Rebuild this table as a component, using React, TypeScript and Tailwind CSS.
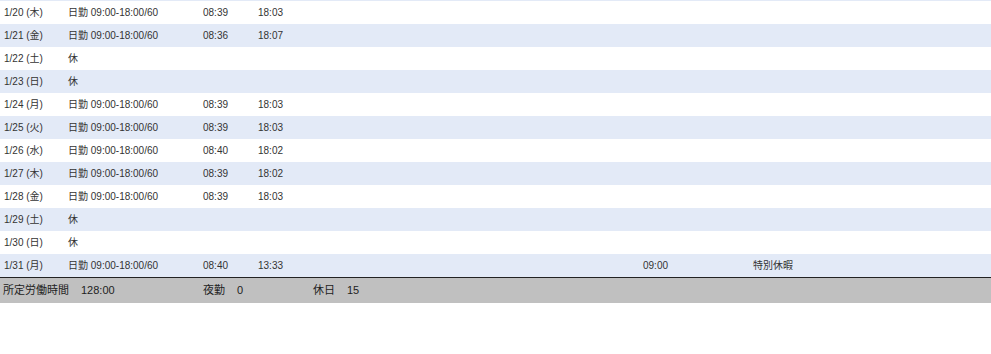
const rows = [
  { d: "1/20 (木)", s: "日勤 09:00-18:00/60", a: "08:39", b: "18:03" },
  { d: "1/21 (金)", s: "日勤 09:00-18:00/60", a: "08:36", b: "18:07" },
  { d: "1/22 (土)", s: "休" },
  { d: "1/23 (日)", s: "休" },
  { d: "1/24 (月)", s: "日勤 09:00-18:00/60", a: "08:39", b: "18:03" },
  { d: "1/25 (火)", s: "日勤 09:00-18:00/60", a: "08:39", b: "18:03" },
  { d: "1/26 (水)", s: "日勤 09:00-18:00/60", a: "08:40", b: "18:02" },
  { d: "1/27 (木)", s: "日勤 09:00-18:00/60", a: "08:39", b: "18:02" },
  { d: "1/28 (金)", s: "日勤 09:00-18:00/60", a: "08:39", b: "18:03" },
  { d: "1/29 (土)", s: "休" },
  { d: "1/30 (日)", s: "休" },
  { d: "1/31 (月)", s: "日勤 09:00-18:00/60", a: "08:40", b: "13:33", h: "09:00", n: "特別休暇" },
];

type Row = { d: string; s: string; a?: string; b?: string; h?: string; n?: string };

export default function App() {
  return (
    <div
      className="w-[991px] h-[354px] bg-white text-[#333] overflow-hidden"
      style={{ fontFamily: '"Liberation Sans", Arial, "Noto Sans CJK JP", sans-serif' }}
    >
      <div className="h-px bg-[#e3eaf7]" />
      {rows.map((r: Row, i) => (
        <div
          key={r.d}
          className={`grid grid-cols-[64px_135px_55px_385px_110px_1fr] h-[23px] items-center pl-1 text-[10px] ${
            i % 2 === 1 ? "bg-[#e3eaf7]" : "bg-white"
          }`}
        >
          <span>{r.d}</span>
          <span>{r.s}</span>
          <span>{r.a}</span>
          <span>{r.b}</span>
          <span>{r.h}</span>
          <span>{r.n}</span>
        </div>
      ))}
      {/* summary footer */}
      <div className="border-t border-[#222] bg-[#c0c0c0] h-[26px] flex items-center text-[11px] text-[#222]">
        <span className="pl-[3px] w-[81px]">所定労働時間</span>
        <span className="w-[122px]">128:00</span>
        <span className="w-[34px]">夜勤</span>
        <span className="w-[76px]">0</span>
        <span className="w-[34px]">休日</span>
        <span>15</span>
      </div>
    </div>
  );
}
